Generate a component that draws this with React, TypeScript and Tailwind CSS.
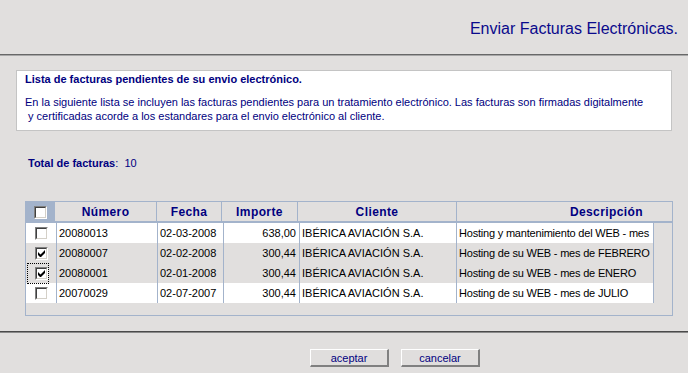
const rows = [
  { num: '20080013', fecha: '02-03-2008', importe: '638,00', cliente: 'IBÉRICA AVIACIÓN S.A.', desc: 'Hosting y mantenimiento del WEB - mes', checked: false },
  { num: '20080007', fecha: '02-02-2008', importe: '300,44', cliente: 'IBÉRICA AVIACIÓN S.A.', desc: 'Hosting de su WEB - mes de FEBRERO', checked: true },
  { num: '20080001', fecha: '02-01-2008', importe: '300,44', cliente: 'IBÉRICA AVIACIÓN S.A.', desc: 'Hosting de su WEB - mes de ENERO', checked: true, focus: true },
  { num: '20070029', fecha: '02-07-2007', importe: '300,44', cliente: 'IBÉRICA AVIACIÓN S.A.', desc: 'Hosting de su WEB - mes de JULIO', checked: false },
];

// classic win32 style checkbox
function Check({ checked }: { checked: boolean }) {
  return (
    <div className="w-[13px] h-[13px] border-t border-l border-t-[#808080] border-l-[#808080] border-b border-r border-b-white border-r-white">
      <div className="w-full h-full bg-white border-t border-l border-t-[#404040] border-l-[#404040] border-b border-r border-b-[#d4d0c8] border-r-[#d4d0c8] flex items-center justify-center">
        {checked && (
          <svg width="7" height="7" viewBox="0 0 7 7">
            <path d="M0 2v3l2 2h1l4-4V0L2.5 4.5z" fill="#000" />
          </svg>
        )}
      </div>
    </div>
  );
}

function Button({ label }: { label: string }) {
  return (
    <button className="w-[79px] h-[18px] bg-[#e0dedd] border-t border-l border-t-white border-l-white border-b-2 border-r-2 border-b-[#808080] border-r-[#808080] text-[#000080] text-[11px] leading-[14px]">
      {label}
    </button>
  );
}

export default function App() {
  return (
    <div className="w-[688px] h-[373px] bg-[#e1dfde] font-['Liberation_Sans',Arial,sans-serif] overflow-hidden">
      <div className="h-[54px] flex justify-end pt-[19px] pr-[10px]">
        <h1 className="text-[16px] leading-[19px] text-[#0a0a8c]">Enviar Facturas Electrónicas.</h1>
      </div>
      <div className="h-[2px] border-t border-t-[#686868] border-b border-b-[#a8a8a8]" />

      <div className="mt-[14px] mx-[16px] h-[61px] bg-white border border-[#c4c4c4] px-[8px] pt-[2px]">
        <div className="text-[11px] leading-[13px] font-bold text-[#000080]">
          Lista de facturas pendientes de su envio electrónico.
        </div>
        <p className="mt-[9px] text-[11px] leading-[14px] text-[#000080]">
          En la siguiente lista se incluyen las facturas pendientes para un tratamiento electrónico. Las facturas son firmadas digitalmente
          <br />
          &nbsp;y certificadas acorde a los estandares para el envio electrónico al cliente.
        </p>
      </div>

      <div className="mt-[26px] ml-[28px] text-[11px] leading-[13px] text-[#000080]">
        <span className="font-bold">Total de facturas</span>:&nbsp; 10
      </div>

      <div className="mt-[31px] ml-[25px] w-[648px] h-[115px] border border-[#a3b3cb]">
        <div className="flex h-[21px] border-b-2 border-b-[#a3b3cb] text-[12px] font-bold tracking-[0.4px] text-[#000080]">
          <div className="w-[28px] bg-[#a3b3cb] flex items-center justify-center pt-[2px]">
            <Check checked={false} />
          </div>
          <div className="w-[102px] border-l border-l-[#a3b3cb] flex items-center justify-center">Número</div>
          <div className="w-[65px] border-l border-l-[#a3b3cb] flex items-center justify-center">Fecha</div>
          <div className="w-[76px] border-l border-l-[#a3b3cb] flex items-center justify-center">Importe</div>
          <div className="w-[159px] border-l border-l-[#a3b3cb] flex items-center justify-center">Cliente</div>
          <div className="flex-1 border-l border-l-[#a3b3cb] flex items-center justify-end pr-[29px]">Descripción</div>
        </div>
        {rows.map((r) => (
          <div key={r.num} className={`flex h-[20px] w-[628px] text-[11px] text-black whitespace-nowrap ${r.checked ? 'bg-[#e1dfde]' : 'bg-white'}`}>
            <div className="w-[30px] shrink-0 flex items-center justify-center relative">
              <Check checked={r.checked} />
              {r.focus && <div className="absolute left-[1px] top-0 w-[22px] h-[21px] border border-dotted border-black" />}
            </div>
            <div className="w-[101px] shrink-0 border-l border-l-[#a3b3cb] flex items-center pl-[2px]">{r.num}</div>
            <div className="w-[66px] shrink-0 border-l border-l-[#a3b3cb] flex items-center pl-[2px]">{r.fecha}</div>
            <div className="w-[76px] shrink-0 border-l border-l-[#a3b3cb] flex items-center justify-end pr-[3px]">{r.importe}</div>
            <div className="w-[157px] shrink-0 border-l border-l-[#a3b3cb] flex items-center pl-[2px]">{r.cliente}</div>
            <div className="flex-1 min-w-0 overflow-hidden border-l border-l-[#a3b3cb] border-r border-r-[#a3b3cb] flex items-center pl-[2px] tracking-[-0.2px]">{r.desc}</div>
          </div>
        ))}
      </div>

      <div className="mt-[15px] h-[2px] border-t border-t-[#4a4a4a] border-b border-b-[#8a8a8a]" />

      <div className="mt-[16px] ml-[310px] flex gap-[12px]">
        <Button label="aceptar" />
        <Button label="cancelar" />
      </div>
    </div>
  );
}
